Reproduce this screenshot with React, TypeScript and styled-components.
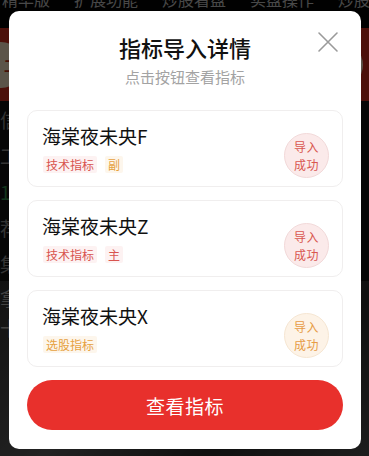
import React from "react";
import styled, { createGlobalStyle } from "styled-components";

const GlobalStyle = createGlobalStyle`
  html, body { margin: 0; padding: 0; background: #0b0b0b; }
  body { font-family: "Noto Sans CJK SC", "Noto Sans", sans-serif; }
  * { box-sizing: border-box; }
`;

const Screen = styled.div`
  position: relative;
  width: 369px;
  height: 456px;
  overflow: hidden;
  background: #101010;
`;

const BackPage = styled.div`
  display: flex;
  flex-direction: column;
  width: 100%;
  height: 100%;
`;

const NavRow = styled.div`
  display: flex;
  gap: 24px;
  height: 40px;
  margin-top: -12px;
  padding: 0 0 0 2px;
  color: #bdbdbd;
  font-size: 16px;
  line-height: 22px;
  white-space: nowrap;
  background: #050505;
`;

const Banner = styled.div`
  display: flex;
  justify-content: space-between;
  align-items: center;
  height: 73px;
  padding: 0 6px 0 0;
  margin-left: -22px;
  background: #c92a1c;
`;

const BannerCoin = styled.div`
  width: 46px;
  height: 46px;
  border-radius: 50%;
  background: #f0dcc0;
  color: #b52a12;
  font-size: 14px;
  font-weight: 700;
  display: flex;
  align-items: center;
  justify-content: flex-end;
  padding-right: 6px;
`;

const ListRow = styled.div<{ $accent?: string }>`
  display: flex;
  align-items: center;
  height: 36px;
  color: ${(p) => p.$accent || "#8a8a8a"};
  font-size: 19px;
  background: #121212;
`;

const Photo = styled.div`
  flex: 1;
  background: linear-gradient(135deg, #303030, #5a5a5a 40%, #2a2a2a 70%, #4e4e4e);
  color: #b0b0b0;
  font-size: 19px;
  line-height: 30px;
  padding: 2px 0;
`;

const Overlay = styled.div`
  position: absolute;
  inset: 0;
  background: rgba(0, 0, 0, 0.62);
  display: flex;
  align-items: flex-start;
  padding: 11px 0 0 9px;
`;

const Modal = styled.div`
  position: relative;
  width: 352px;
  height: 438px;
  background: #ffffff;
  border-radius: 10px;
  padding: 21px 18px 19px 18px;
  display: flex;
  flex-direction: column;
`;

const Title = styled.div`
  text-align: center;
  font-size: 22px;
  line-height: 30px;
  font-weight: 500;
  color: #111111;
`;

const Subtitle = styled.div`
  margin-top: 5px;
  text-align: center;
  font-size: 15px;
  line-height: 20px;
  color: #a3a3a3;
`;

const CloseButton = styled.button`
  position: absolute;
  top: 19px;
  right: 21px;
  width: 24px;
  height: 24px;
  padding: 0;
  border: none;
  background: transparent;
  display: flex;
  align-items: center;
  justify-content: center;
`;

const CardList = styled.div`
  margin-top: 23px;
  display: flex;
  flex-direction: column;
  gap: 13px;
`;

const Card = styled.div`
  height: 77px;
  border: 1px solid #f0eeee;
  border-radius: 10px;
  padding: 12px 13px 8px 14px;
  display: flex;
  align-items: flex-end;
  justify-content: space-between;
  background: #fff;
`;

const CardInfo = styled.div`
  display: flex;
  flex-direction: column;
  align-self: stretch;
`;

const Name = styled.div`
  font-size: 19px;
  line-height: 26px;
  color: #111111;
`;

const TagRow = styled.div`
  margin-top: 7px;
  margin-left: 1px;
  display: flex;
  gap: 8px;
`;

const Tag = styled.span<{ $tone: "red" | "orange" }>`
  height: 17px;
  line-height: 17px;
  padding: 0 3px;
  font-size: 12px;
  border-radius: 2px;
  color: ${(p) => (p.$tone === "red" ? "#d8544f" : "#e6a140")};
  background: ${(p) => (p.$tone === "red" ? "#fdf2f2" : "#fdf6ec")};
`;

const Badge = styled.div<{ $tone: "red" | "orange" }>`
  width: 45px;
  height: 45px;
  border-radius: 50%;
  flex-shrink: 0;
  display: flex;
  flex-direction: column;
  align-items: center;
  justify-content: center;
  font-size: 12px;
  color: ${(p) => (p.$tone === "red" ? "#d9574f" : "#e79c45")};
  background: ${(p) => (p.$tone === "red" ? "#fbeaea" : "#fdf3e7")};
  border: 1px solid ${(p) => (p.$tone === "red" ? "#f2d9d9" : "#f6e6d2")};
`;

const BadgeLine = styled.span`
  display: block;
  height: 17.6px;
  line-height: 17.6px;
  letter-spacing: 0.5px;
`;

const PrimaryButton = styled.button`
  margin-top: 13px;
  height: 50px;
  width: 100%;
  border: none;
  border-radius: 25px;
  background: #e8302c;
  color: #ffffff;
  font-family: "Noto Sans CJK SC", "Noto Sans", sans-serif;
  font-size: 19px;
  letter-spacing: 0.5px;
`;

type Tone = "red" | "orange";
const items: { name: string; tags: { label: string; tone: Tone }[]; badge: Tone }[] = [
  { name: "海棠夜未央F", tags: [{ label: "技术指标", tone: "red" }, { label: "副", tone: "orange" }], badge: "red" },
  { name: "海棠夜未央Z", tags: [{ label: "技术指标", tone: "red" }, { label: "主", tone: "red" }], badge: "red" },
  { name: "海棠夜未央X", tags: [{ label: "选股指标", tone: "orange" }], badge: "orange" },
];

export default function App() {
  return (
    <>
      <GlobalStyle />
      <Screen>
        <BackPage>
          <NavRow>
            <span>精华版</span>
            <span>扩展功能</span>
            <span>炒股看盘</span>
            <span>实盘操作</span>
            <span>炒股专区</span>
          </NavRow>
          <Banner>
            <BannerCoin>工</BannerCoin>
            <BannerCoin>荐</BannerCoin>
          </Banner>
          <ListRow>信</ListRow>
          <ListRow>工</ListRow>
          <ListRow $accent="#2f8a48">1</ListRow>
          <ListRow>荐</ListRow>
          <ListRow>集</ListRow>
          <Photo>拿<br />十</Photo>
        </BackPage>
        <Overlay>
          <Modal>
            <Title>指标导入详情</Title>
            <Subtitle>点击按钮查看指标</Subtitle>
            <CloseButton aria-label="关闭">
              <svg width="22" height="22" viewBox="0 0 22 22">
                <path d="M2 2 L20 20 M20 2 L2 20" stroke="#9a9a9a" strokeWidth="1.6" fill="none" strokeLinecap="round" />
              </svg>
            </CloseButton>
            <CardList>
              {items.map((it) => (
                <Card key={it.name}>
                  <CardInfo>
                    <Name>{it.name}</Name>
                    <TagRow>
                      {it.tags.map((t) => (
                        <Tag key={t.label} $tone={t.tone}>{t.label}</Tag>
                      ))}
                    </TagRow>
                  </CardInfo>
                  <Badge $tone={it.badge}>
                    <BadgeLine>导入</BadgeLine>
                    <BadgeLine>成功</BadgeLine>
                  </Badge>
                </Card>
              ))}
            </CardList>
            <PrimaryButton>查看指标</PrimaryButton>
          </Modal>
        </Overlay>
      </Screen>
    </>
  );
}
